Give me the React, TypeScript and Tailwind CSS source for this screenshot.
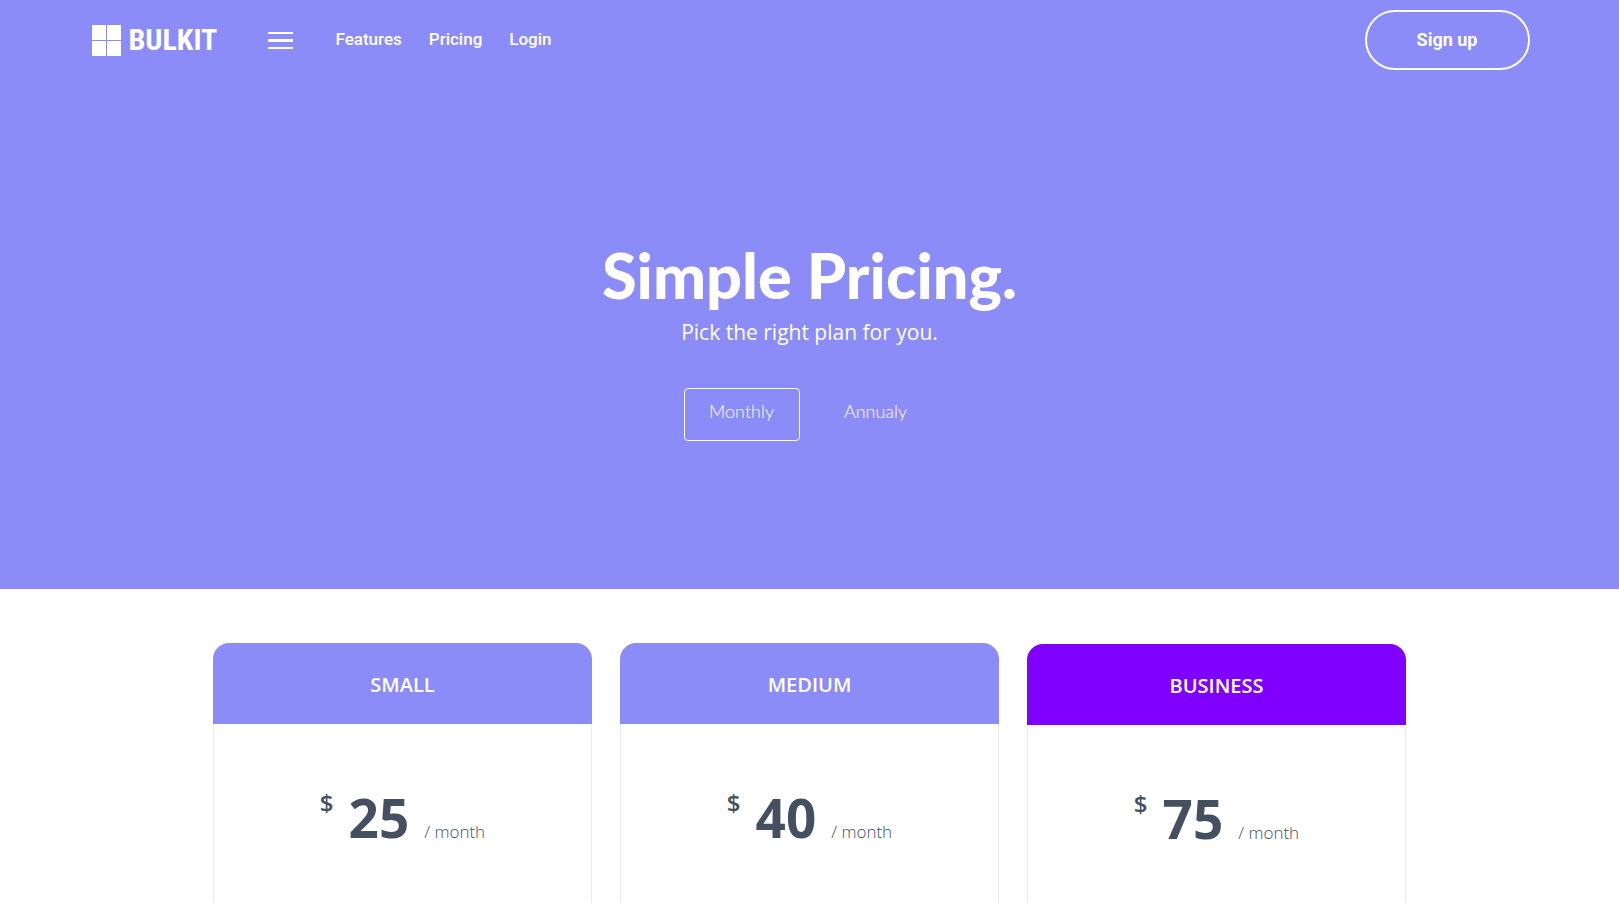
import { useState } from "react";

const NAV_LINKS = ["Features", "Pricing", "Login"];

const PERIODS = ["Monthly", "Annualy"];

const PLANS = [
  { name: "SMALL", price: 25, featured: false },
  { name: "MEDIUM", price: 40, featured: false },
  { name: "BUSINESS", price: 75, featured: true },
];

function Logo() {
  return (
    <a href="#" className="flex items-center gap-2 text-white">
      <svg width="29" height="31" viewBox="0 0 29 31" fill="currentColor" aria-hidden="true">
        <rect x="0" y="0" width="14" height="15" />
        <rect x="15" y="0" width="14" height="15" />
        <rect x="0" y="16" width="14" height="15" />
        <rect x="15" y="16" width="14" height="15" />
      </svg>
      <span className="font-['Roboto_Condensed','Liberation_Sans_Narrow',sans-serif] text-[30px] leading-8 font-bold">
        BULKIT
      </span>
    </a>
  );
}

function Navbar() {
  return (
    <header className="mx-auto flex h-20 w-full max-w-[1440px] items-center justify-between">
      <div className="flex items-center">
        <div className="w-[178px] pl-0.5">
          <Logo />
        </div>
        <button type="button" aria-label="Menu" className="flex w-[25px] flex-col gap-[5px]">
          <span className="h-0.5 w-full bg-white" />
          <span className="h-[3px] w-full bg-white" />
          <span className="h-0.5 w-full bg-white" />
        </button>
        <nav className="ml-[43px] flex gap-[27px] font-[Roboto,sans-serif] text-[17px] font-medium text-white">
          {NAV_LINKS.map((link) => (
            <a key={link} href="#">{link}</a>
          ))}
        </nav>
      </div>
      <button
        type="button"
        className="h-[60px] w-[165px] rounded-full border-2 border-white font-[Roboto,sans-serif] text-lg font-bold text-white"
      >
        Sign up
      </button>
    </header>
  );
}

function PlanCard({ name, price, featured }: { name: string; price: number; featured: boolean }) {
  return (
    <article className={featured ? "pt-px" : ""}>
      <h2
        className={`flex h-[81px] items-center justify-center rounded-t-2xl pt-0.5 text-xl font-semibold text-white ${
          featured ? "bg-[#7f00ff]" : "bg-[#8c8cf9]"
        }`}
      >
        {name}
      </h2>
      <div className="flex h-[480px] items-start justify-center border-x border-b border-[#ebebeb] pt-16 text-[#444f60]">
        <p className="flex items-baseline">
          <span className="-translate-y-[26px] text-2xl font-semibold">$</span>
          <span className="mx-[15px] text-[53px] leading-[60px] font-bold">{price}</span>
          <span className="text-[17px] font-light">/ month</span>
        </p>
      </div>
    </article>
  );
}

export default function App() {
  const [period, setPeriod] = useState("Monthly");

  return (
    <div className="h-screen overflow-hidden bg-white font-['Open_Sans','Noto_Sans',sans-serif]">
      <div className="bg-[#8c8cf9] pb-[148px] text-white">
        <Navbar />
        <section className="flex flex-col items-center pt-[158px]">
          <h1 className="font-[Lato,sans-serif] text-[63px] leading-[74px] font-black">Simple Pricing.</h1>
          <p className="mt-1 text-[21px] leading-8">Pick the right plan for you.</p>
          <div className="mt-10 flex w-[252px] gap-[18px] font-[Lato,sans-serif] text-lg font-light">
            {PERIODS.map((p) => (
              <button
                key={p}
                type="button"
                aria-pressed={period === p}
                onClick={() => setPeriod(p)}
                className={`h-[53px] w-[116px] rounded border pb-2 ${
                  period === p ? "border-white" : "border-transparent"
                }`}
              >
                {p}
              </button>
            ))}
          </div>
        </section>
      </div>

      <main className="mx-auto grid max-w-[1193px] grid-cols-3 gap-7 pt-[54px]">
        {PLANS.map((plan) => (
          <PlanCard key={plan.name} {...plan} />
        ))}
      </main>
    </div>
  );
}
